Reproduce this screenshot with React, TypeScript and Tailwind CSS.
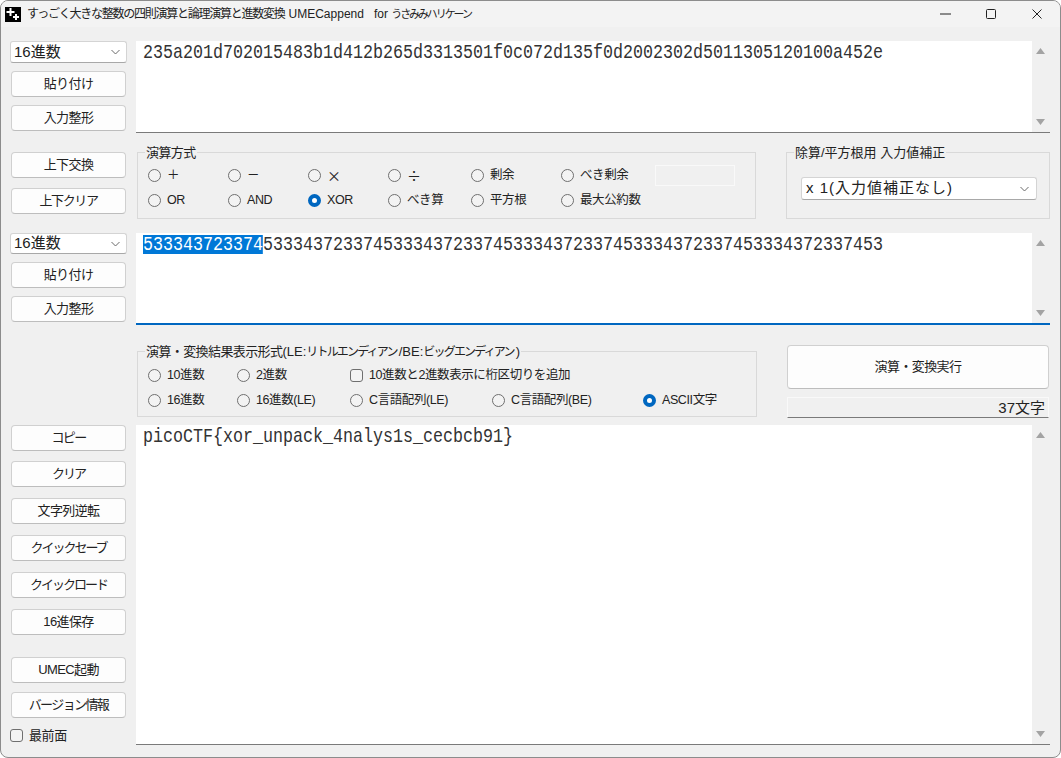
import type { ReactNode } from 'react';

function Btn({
  label,
  className = '',
  track = 'tracking-[-0.6px]',
}: {
  label: string;
  className?: string;
  track?: string;
}) {
  return (
    <button
      className={`w-[115px] h-[26px] shrink-0 rounded-[4px] border border-[#d0d0d0] border-b-[#bdbdbd] bg-[#fdfdfd] text-[13px] leading-[24px] text-[#222] whitespace-nowrap ${track} ${className}`}
    >
      {label}
    </button>
  );
}

function Chevron() {
  return (
    <svg width="9" height="6" viewBox="0 0 9 6" className="shrink-0">
      <path d="M0.5 1 L4.5 5 L8.5 1" fill="none" stroke="#6a6a6a" strokeWidth="1" />
    </svg>
  );
}

function Select({ className = '' }: { className?: string }) {
  return (
    <div
      className={`-ml-[1px] w-[117px] shrink-0 flex items-center justify-between pl-[3px] pr-[6px] bg-white border border-[#d4d4d4] border-b-[#a8a8a8] rounded-[3px] text-[15px] text-[#222] ${className}`}
    >
      <span>16進数</span>
      <Chevron />
    </div>
  );
}

function ScrollBar() {
  return (
    <div className="w-[18px] shrink-0 bg-[#f0f0f0] flex flex-col justify-between items-center py-[7px] pr-[1px]">
      <svg width="9" height="6" viewBox="0 0 9 6">
        <path d="M4.5 0 L9 6 L0 6 Z" fill="#a3a3a3" />
      </svg>
      <svg width="9" height="6" viewBox="0 0 9 6">
        <path d="M4.5 6 L9 0 L0 0 Z" fill="#a3a3a3" />
      </svg>
    </div>
  );
}

// the original font is a tall narrow half-width gothic, so squeeze a mono face down to 10px a character
function Editor({ children, className = '' }: { children: ReactNode; className?: string }) {
  return (
    <div className={`flex-1 h-full min-w-0 flex bg-white overflow-hidden ${className}`}>
      <div className="flex-1 min-w-0 pl-[7px] pt-[2px] overflow-hidden">
        <div className="origin-left scale-x-[0.7935] font-['Liberation_Mono',monospace] text-[21px] leading-[19px] text-[#333] whitespace-nowrap">
          {children}
        </div>
      </div>
      <ScrollBar />
    </div>
  );
}

function Radio({
  label,
  checked = false,
  labelClass = '',
}: {
  label: string;
  checked?: boolean;
  labelClass?: string;
}) {
  return (
    <div className="flex items-center gap-[6px] whitespace-nowrap">
      <span
        className={
          checked
            ? 'w-[13px] h-[13px] rounded-full border-[4px] border-[#0067c0] bg-white shrink-0'
            : 'w-[13px] h-[13px] rounded-full border border-[#6f6f6f] bg-[#f3f3f3] shrink-0'
        }
      />
      <span className={labelClass}>{label}</span>
    </div>
  );
}

function Check({ label }: { label: string }) {
  return (
    <div className="flex items-center gap-[6px] whitespace-nowrap">
      <span className="w-[13px] h-[13px] rounded-[3px] border border-[#6f6f6f] bg-[#f3f3f3] shrink-0" />
      <span>{label}</span>
    </div>
  );
}

function Group({
  title,
  className = '',
  track = 'tracking-[-0.6px]',
  children,
}: {
  title: ReactNode;
  className?: string;
  track?: string;
  children: ReactNode;
}) {
  return (
    <div className={`relative border border-[#d9d9d9] ${className}`}>
      <span
        className={`absolute left-[7px] -top-[9px] bg-[#f0f0f0] px-[1px] text-[13px] leading-[17px] text-[#222] whitespace-nowrap ${track}`}
      >
        {title}
      </span>
      {children}
    </div>
  );
}

function WindowIcon() {
  return (
    <svg width="16" height="15" viewBox="0 0 16 15" className="shrink-0">
      <rect width="16" height="15" fill="#000" />
      <path d="M5.5 1 V9 M1.5 5 H9.5" stroke="#fff" strokeWidth="2" />
      <path d="M11 7 V13 M8 10 H14" stroke="#fff" strokeWidth="2" />
    </svg>
  );
}

const kana = 'tracking-[-2px]';
const narrowKana = 'text-[12px] tracking-[-1.8px]';

export default function App() {
  const selected = '533343723374';
  const rest = '533343723374'.repeat(5) + '53';

  return (
    <div className="w-[1061px] h-[758px] bg-white">
      <div className="w-full h-full flex flex-col overflow-hidden border border-[#8c8c8c] rounded-[8px] bg-[#f0f0f0] font-['Liberation_Sans','Noto_Sans_CJK_JP',sans-serif] text-[13px] text-[#222]">
        {/* title bar */}
        <div className="h-[26px] shrink-0 flex items-center bg-[#f3f3f3]">
          <div className="pl-[4px] pr-[6px]">
            <WindowIcon />
          </div>
          <span className="flex-1 text-[12px] tracking-[-1.25px] whitespace-pre">
            すっごく大きな整数の四則演算と論理演算と進数変換
            <span className="tracking-[0] pl-[4px]">UMECappend   for </span>
            <span className="text-[11px] tracking-[-2.1px]">うさみみハリケーン</span>
          </span>
          <div className="w-[46px] flex justify-center">
            <svg width="11" height="2" viewBox="0 0 11 2">
              <path d="M0 1 H11" stroke="#222" strokeWidth="1" />
            </svg>
          </div>
          <div className="w-[46px] flex justify-center">
            <svg width="10" height="10" viewBox="0 0 10 10">
              <rect x="0.5" y="0.5" width="9" height="9" rx="1" fill="none" stroke="#222" />
            </svg>
          </div>
          <div className="w-[46px] flex justify-center">
            <svg width="10" height="10" viewBox="0 0 10 10">
              <path d="M0.5 0.5 L9.5 9.5 M9.5 0.5 L0.5 9.5" stroke="#222" strokeWidth="1" />
            </svg>
          </div>
        </div>

        {/* body */}
        <div className="flex-1 flex flex-col pt-[14px]">
          {/* first value */}
          <div className="h-[92px] shrink-0 flex">
            <div className="w-[135px] shrink-0 pl-[10px] flex flex-col gap-[8px]">
              <Select className="h-[22px]" />
              <Btn label="貼り付け" />
              <Btn label="入力整形" />
            </div>
            <div className="flex-1 min-w-0 pr-[10px]">
              <Editor className="border-b border-[#7a7a7a]">
                235a201d702015483b1d412b265d3313501f0c072d135f0d2002302d5011305120100a452e
              </Editor>
            </div>
          </div>

          {/* operation */}
          <div className="h-[100px] shrink-0 flex">
            <div className="w-[135px] shrink-0 pl-[10px] pt-[19px] flex flex-col gap-[10px]">
              <Btn label="上下交換" />
              <Btn label="上下クリア" track="tracking-[-1.4px]" />
            </div>
            <div className="flex-1 min-w-0 pr-[10px] pt-[19px] pl-[1px] flex items-start">
              <Group title="演算方式" className="w-[619px] h-[67px] pl-[10px] pt-[10px]">
                <div className="grid grid-cols-[80px_80px_80px_83px_90px_94px_80px] auto-rows-[25px] items-center text-[12.5px] tracking-[-0.4px]">
                  <Radio label="＋" />
                  <Radio label="－" />
                  <Radio label="×" labelClass="font-['Noto_Sans_CJK_JP',sans-serif] text-[14px]" />
                  <Radio label="÷" labelClass="font-['Noto_Sans_CJK_JP',sans-serif] text-[14px]" />
                  <Radio label="剰余" />
                  <Radio label="べき剰余" />
                  <div className="w-[80px] h-[21px] border border-[#f9f9f9]" />
                  <Radio label="OR" />
                  <Radio label="AND" />
                  <Radio label="XOR" checked />
                  <Radio label="べき算" />
                  <Radio label="平方根" />
                  <Radio label="最大公約数" />
                </div>
              </Group>
              <Group
                title="除算/平方根用 入力値補正"
                track="tracking-[0]"
                className="ml-[30px] w-[264px] h-[67px] pl-[14px] pt-[24px]"
              >
                <div className="w-[236px] h-[23px] flex items-center justify-between pl-[4px] pr-[7px] bg-white border border-[#d4d4d4] border-b-[#a8a8a8] rounded-[3px] text-[15px] tracking-[1px]">
                  <span className="whitespace-pre">x 1(入力値補正なし)</span>
                  <Chevron />
                </div>
              </Group>
            </div>
          </div>

          {/* second value */}
          <div className="h-[92px] shrink-0 flex">
            <div className="w-[135px] shrink-0 pl-[10px] flex flex-col gap-[8px]">
              <Select className="h-[21px]" />
              <Btn label="貼り付け" />
              <Btn label="入力整形" />
            </div>
            <div className="flex-1 min-w-0 pr-[10px]">
              <Editor className="border-b-2 border-[#0067c0]">
                <span className="inline-block h-[19px] bg-[#0078d7] text-white">{selected}</span>
                {rest}
              </Editor>
            </div>
          </div>

          {/* result format */}
          <div className="h-[100px] shrink-0 flex">
            <div className="w-[135px] shrink-0" />
            <div className="flex-1 min-w-0 pr-[10px] pl-[1px] flex items-start">
              <Group
                title={
                  <>
                    演算・変換結果表示形式
                    <span className="tracking-[0]">(LE:</span>
                    <span className={narrowKana}>リトルエンディアン</span>
                    <span className="tracking-[0] pl-[2px]">/BE:</span>
                    <span className={narrowKana}>ビッグエンディアン</span>
                    <span className="tracking-[0] pl-[2px]">)</span>
                  </>
                }
                className="mt-[26px] w-[620px] h-[66px] pl-[10px] pt-[11px]"
              >
                <div className="grid grid-cols-[89px_113px_142px_151px_100px] auto-rows-[25px] items-center text-[12.5px] tracking-[-0.4px]">
                  <Radio label="10進数" />
                  <Radio label="2進数" />
                  <div className="col-span-3">
                    <Check label="10進数と2進数表示に桁区切りを追加" />
                  </div>
                  <Radio label="16進数" />
                  <Radio label="16進数(LE)" />
                  <Radio label="C言語配列(LE)" />
                  <Radio label="C言語配列(BE)" />
                  <Radio label="ASCII文字" checked />
                </div>
              </Group>
              <div className="ml-[30px] w-[262px] mt-[20px] flex flex-col gap-[8px]">
                <button className="h-[44px] rounded-[4px] border border-[#d0d0d0] border-b-[#bdbdbd] bg-[#fdfdfd] text-[13px] tracking-[-0.6px]">
                  演算・変換実行
                </button>
                <div className="h-[21px] border border-[#f9f9f9] border-b-[#7a7a7a] bg-[#f0f0f0] text-right pr-[3px] text-[15px] leading-[20px]">
                  37文字
                </div>
              </div>
            </div>
          </div>

          {/* result */}
          <div className="h-[320px] shrink-0 flex">
            <div className="w-[135px] shrink-0 pl-[10px] flex flex-col gap-[11px]">
              <Btn label="コピー" track="tracking-[-1.6px]" />
              <Btn label="クリア" className="-mt-[1px]" track={kana} />
              <Btn label="文字列逆転" />
              <Btn label="クイックセーブ" track={kana} />
              <Btn label="クイックロード" track={kana} />
              <Btn label="16進保存" />
              <Btn label="UMEC起動" className="mt-[11px]" />
              <Btn label="バージョン情報" className="-mt-[2px]" track="tracking-[-1.6px]" />
              <div className="-ml-[1px] -mt-[3px] flex items-center gap-[6px] text-[13px] tracking-[-0.4px]">
                <span className="w-[13px] h-[13px] rounded-[3px] border border-[#6f6f6f] bg-[#f3f3f3] shrink-0" />
                <span>最前面</span>
              </div>
            </div>
            <div className="flex-1 min-w-0 pr-[10px]">
              <Editor className="border-b border-[#7a7a7a]">picoCTF{'{'}xor_unpack_4nalys1s_cecbcb91{'}'}</Editor>
            </div>
          </div>
        </div>
      </div>
    </div>
  );
}
